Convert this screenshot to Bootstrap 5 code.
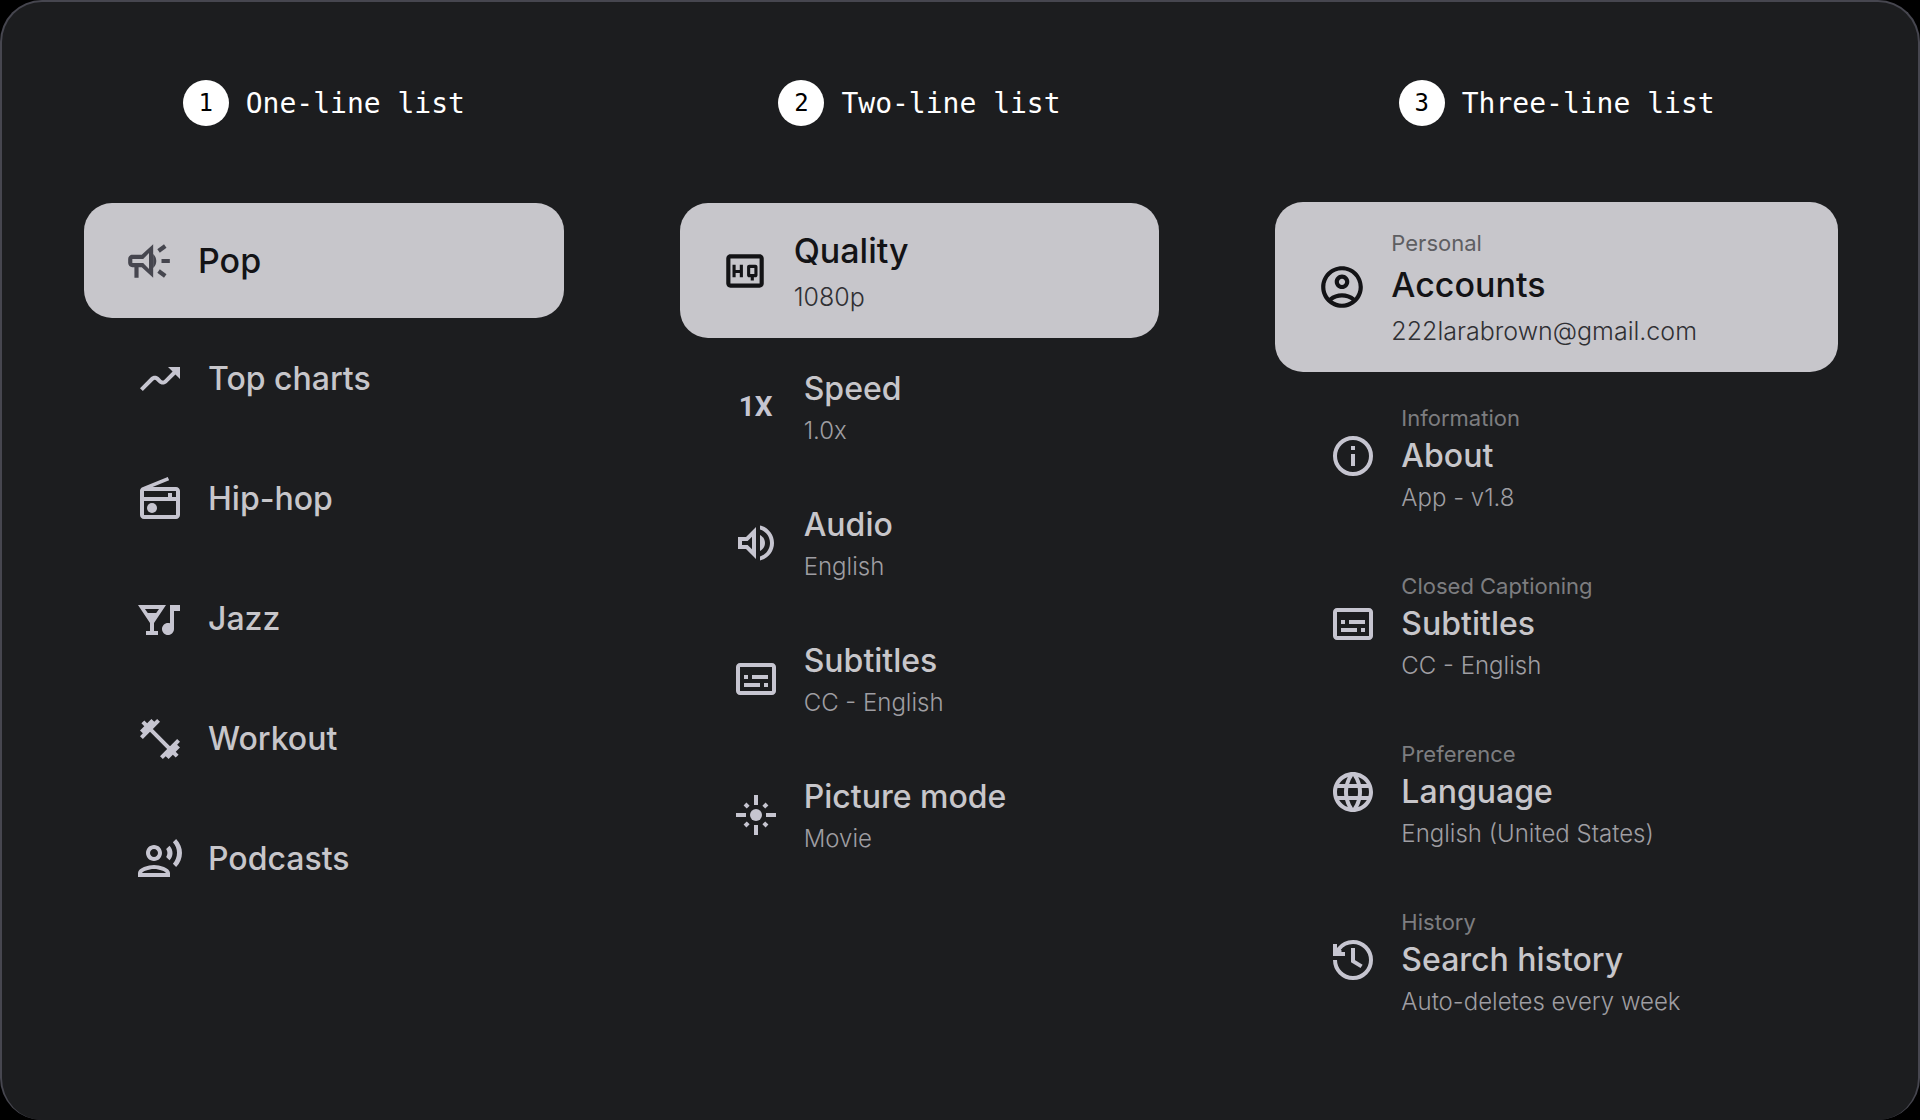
<!DOCTYPE html>
<html lang="en" data-bs-theme="dark">
<head>
<meta charset="utf-8">
<meta name="viewport" content="width=device-width, initial-scale=1">
<title>List types</title>
<link href="https://cdn.jsdelivr.net/npm/bootstrap@5.3.0/dist/css/bootstrap.min.css" rel="stylesheet">
<style>
  body { background: #000; font-family: Inter, "Open Sans", sans-serif; }
  .stage { background: #1c1d1f; border: 2px solid #46464f; border-bottom: 0; border-radius: 42px; padding: 78px 80px 40px 82px; }
  .columns { display: grid; grid-template-columns: 480fr 480fr 563fr; column-gap: 116px; }
  .col-title { margin-bottom: 75px; gap: 17px; color: #fff; font: 500 28px/48px "DejaVu Sans Mono", monospace; }
  .col-title.tight { margin-bottom: 74px; }
  .num { width: 46px; height: 46px; font-size: 24px; line-height: 46px; background: #fff; color: #000; }

  .tv-list { --bs-list-group-bg: transparent; --bs-list-group-border-width: 0; --bs-list-group-color: #c7c6ca;
    --bs-list-group-action-hover-bg: #2b2c2f; --bs-list-group-active-bg: #c7c6cb; --bs-list-group-active-color: #131316;
    --bs-list-group-border-radius: 28px; --bs-list-group-action-color: #c7c6ca; }
  .tv-item { display: flex; align-items: center; gap: 24px; padding: 0 24px 0 52px; border-radius: 28px; }
  .tv-item.active { padding-left: 40px; margin-bottom: 1px; }
  .one .tv-item { height: 120px; }
  .one .tv-item.active { height: 115px; }
  .two .tv-item { height: 136px; }
  .two .tv-item.active { height: 135px; }
  .three .tv-item { height: 168px; padding-left: 54px; }
  .three .tv-item.active { height: 170px; padding-left: 42px; margin-bottom: 0; }

  .glyph { width: 48px; height: 48px; flex: none; fill: #c6c5d0; stroke: none; }
  .glyph .ln { fill: none; stroke: #c6c5d0; stroke-width: 2; }
  .glyph-text { width: 48px; flex: none; text-align: center; color: #c6c5d0; font: 700 28px/48px Roboto, sans-serif; }
  .active .glyph { width: 50px; height: 50px; fill: #131316; }
  .active .glyph.soft { fill: #46464f; }

  .over { font-size: 22px; line-height: 28px; color: #7d7d80; font-weight: 400; }
  .head { font-size: 32px; line-height: 48px; font-weight: 500; }
  .sub { font-size: 24px; line-height: 36px; color: #9f9ea2; font-weight: 300; }
  .active .over { font-size: 22px; line-height: 32px; color: #5e5e62; }
  .active .head { font-size: 34px; line-height: 52px; }
  .active .sub { font-size: 25px; line-height: 40px; color: #303034; }
</style>
</head>
<body>
<main class="stage min-vh-100">
  <div class="columns">

    <section>
      <h2 class="col-title d-flex justify-content-center"><span class="num rounded-circle text-center">1</span>One-line list</h2>
      <div class="list-group tv-list one">
        <a href="#" class="list-group-item list-group-item-action tv-item active" aria-current="true">
          <svg class="glyph soft" viewBox="0 0 24 24" aria-hidden="true"><path d="M18 11v2h4v-2h-4zm-2 6.61c.96.71 2.21 1.65 3.2 2.39.4-.53.8-1.07 1.2-1.6-.99-.74-2.24-1.68-3.2-2.4-.4.54-.8 1.08-1.2 1.61zM20.4 5.6c-.4-.53-.8-1.07-1.2-1.6-.99.74-2.24 1.68-3.2 2.4.4.53.8 1.07 1.2 1.6.96-.72 2.21-1.65 3.2-2.4zM15.5 12c0-1.33-.58-2.53-1.5-3.35v6.69c.92-.81 1.5-2.01 1.5-3.34z"/><path fill-rule="evenodd" d="M4 9c-1.1 0-2 .9-2 2v2c0 1.1.9 2 2 2h1v5h2v-5h1.500L14 20V4L8.500 9H4zM12 8.200v7.600L9.200 13H4v-2h5.200z"/></svg>
          <span class="head">Pop</span>
        </a>
        <a href="#" class="list-group-item list-group-item-action tv-item">
          <svg class="glyph" viewBox="0 0 24 24" aria-hidden="true"><path d="M19.71 9.71L22 12V6h-6l2.29 2.29-4.17 4.17c-.39.39-1.02.39-1.41 0l-1.17-1.17c-1.17-1.17-3.07-1.17-4.24 0L2 16.59 3.41 18l5.29-5.29c.39-.39 1.02-.39 1.41 0l1.17 1.17c1.17 1.17 3.07 1.17 4.24 0l4.19-4.17z"/></svg>
          <span class="head">Top charts</span>
        </a>
        <a href="#" class="list-group-item list-group-item-action tv-item">
          <svg class="glyph" viewBox="0 0 24 24" aria-hidden="true"><path d="M20 6H8.3l8.26-3.34L15.88 1 3.24 6.15C2.51 6.43 2 7.17 2 8v12c0 1.1.89 2 2 2h16c1.11 0 2-.9 2-2V8c0-1.11-.89-2-2-2zm0 2v3h-2V9h-2v2H4V8h16zM4 20v-7h16v7H4z"/><circle cx="8" cy="16.48" r="2.5"/></svg>
          <span class="head">Hip-hop</span>
        </a>
        <a href="#" class="list-group-item list-group-item-action tv-item">
          <svg class="glyph" viewBox="0 0 24 24" aria-hidden="true"><path fill-rule="evenodd" d="M1 5h14l-6 9v4h2v2H5v-2h2v-4L1 5zM10.1 9l1.4-2H4.49l1.4 2h4.21zM17 5h5v3h-3v9c0 1.66-1.34 3-3 3s-3-1.34-3-3 1.34-3 3-3c.35 0 .69.06 1 .17V5z"/></svg>
          <span class="head">Jazz</span>
        </a>
        <a href="#" class="list-group-item list-group-item-action tv-item">
          <svg class="glyph" viewBox="0 0 24 24" aria-hidden="true"><path d="M20.57 14.86L22 13.43 20.57 12 17 15.57 8.43 7 12 3.43 10.57 2 9.14 3.43 7.71 2 5.57 4.14 4.14 2.71 2.71 4.14l1.43 1.43L2 7.71l1.43 1.43L2 10.57 3.43 12 7 8.43 15.57 17 12 20.57 13.43 22l1.43-1.43L16.29 22l2.14-2.14 1.43 1.43 1.43-1.43-1.43-1.43L22 16.29z"/></svg>
          <span class="head">Workout</span>
        </a>
        <a href="#" class="list-group-item list-group-item-action tv-item">
          <svg class="glyph" viewBox="0 0 24 24" aria-hidden="true"><path d="M9 13c2.21 0 4-1.79 4-4s-1.79-4-4-4-4 1.79-4 4 1.79 4 4 4zm0-6c1.1 0 2 .9 2 2s-.9 2-2 2-2-.9-2-2 .9-2 2-2zm0 8c-2.67 0-8 1.34-8 4v2h16v-2c0-2.66-5.33-4-8-4zm-6 4c.22-.72 3.31-2 6-2 2.7 0 5.8 1.29 6 2H3zM15.08 7.05c.84 1.18.84 2.71 0 3.89l1.68 1.69c2.02-2.02 2.02-5.07 0-7.27l-1.68 1.69zM20.07 2l-1.63 1.63c2.77 3.02 2.77 7.56 0 10.74L20.07 16c3.9-3.89 3.91-9.95 0-14z"/></svg>
          <span class="head">Podcasts</span>
        </a>
      </div>
    </section>

    <section>
      <h2 class="col-title d-flex justify-content-center"><span class="num rounded-circle text-center">2</span>Two-line list</h2>
      <div class="list-group tv-list two">
        <a href="#" class="list-group-item list-group-item-action tv-item active" aria-current="true">
          <svg class="glyph" viewBox="0 0 24 24" aria-hidden="true"><path d="M19 4H5c-1.11 0-2 .9-2 2v12c0 1.1.89 2 2 2h14c1.1 0 2-.9 2-2V6c0-1.1-.9-2-2-2zm0 14H5V6h14v12z"/><path d="M7.5 13h2v2H11V9H9.5v2.500h-2V9H6v6h1.500v-2zm6.500 2h.75v1.500h1.500V15H17c.55 0 1-.45 1-1v-4c0-.55-.45-1-1-1h-3c-.55 0-1 .45-1 1v4c0 .55.45 1 1 1zm.500-4.500h2v3h-2v-3z"/></svg>
          <span><span class="head d-block">Quality</span><span class="sub d-block">1080p</span></span>
        </a>
        <a href="#" class="list-group-item list-group-item-action tv-item">
          <span class="glyph-text">1X</span>
          <span><span class="head d-block">Speed</span><span class="sub d-block">1.0x</span></span>
        </a>
        <a href="#" class="list-group-item list-group-item-action tv-item">
          <svg class="glyph" viewBox="0 0 24 24" aria-hidden="true"><path d="M3 9v6h4l5 5V4L7 9H3zm7-.17v6.34L7.83 13H5v-2h2.83L10 8.83zM16.5 12c0-1.77-1.02-3.29-2.5-4.03v8.05c1.48-.73 2.5-2.25 2.5-4.02zM14 3.23v2.06c2.89.86 5 3.54 5 6.71s-2.11 5.85-5 6.71v2.06c4.01-.91 7-4.49 7-8.77s-2.99-7.86-7-8.77z"/></svg>
          <span><span class="head d-block">Audio</span><span class="sub d-block">English</span></span>
        </a>
        <a href="#" class="list-group-item list-group-item-action tv-item">
          <svg class="glyph" viewBox="0 0 24 24" aria-hidden="true"><path d="M20 4H4c-1.1 0-2 .9-2 2v12c0 1.1.9 2 2 2h16c1.1 0 2-.9 2-2V6c0-1.1-.9-2-2-2zm0 14H4V6h16v12zM6 10h2v2H6zM6 14h8v2H6zM16 14h2v2h-2zM10 10h8v2h-8z"/></svg>
          <span><span class="head d-block">Subtitles</span><span class="sub d-block">CC - English</span></span>
        </a>
        <a href="#" class="list-group-item list-group-item-action tv-item">
          <svg class="glyph" viewBox="0 0 24 24" aria-hidden="true"><circle cx="12" cy="12" r="3"/><path class="ln" d="M2 12h5M17 12h5M12 2v5M12 17v5M6.5 6.5l1.6 1.6M17.5 6.5l-1.6 1.6M6.5 17.5l1.6-1.6M17.5 17.5l-1.6-1.6"/></svg>
          <span><span class="head d-block">Picture mode</span><span class="sub d-block">Movie</span></span>
        </a>
      </div>
    </section>

    <section>
      <h2 class="col-title tight d-flex justify-content-center"><span class="num rounded-circle text-center">3</span>Three-line list</h2>
      <div class="list-group tv-list three">
        <a href="#" class="list-group-item list-group-item-action tv-item active" aria-current="true">
          <svg class="glyph" viewBox="0 0 24 24" aria-hidden="true"><path d="M12 2C6.48 2 2 6.48 2 12s4.48 10 10 10 10-4.48 10-10S17.52 2 12 2zM7.35 18.5C8.66 17.56 10.26 17 12 17s3.34.56 4.65 1.5c-1.31.94-2.91 1.5-4.65 1.5s-3.34-.56-4.65-1.5zm10.79-1.38C16.45 15.8 14.32 15 12 15s-4.45.8-6.14 2.12C4.7 15.73 4 13.95 4 12c0-4.42 3.58-8 8-8s8 3.58 8 8c0 1.95-.7 3.73-1.86 5.12zM12 6c-1.93 0-3.5 1.57-3.5 3.5S10.07 13 12 13s3.5-1.57 3.5-3.5S13.93 6 12 6zm0 5c-.83 0-1.5-.67-1.5-1.5S11.17 8 12 8s1.5.67 1.5 1.5S12.83 11 12 11z"/></svg>
          <span class="pt-1"><span class="over d-block">Personal</span><span class="head d-block">Accounts</span><span class="sub d-block">222larabrown@gmail.com</span></span>
        </a>
        <a href="#" class="list-group-item list-group-item-action tv-item">
          <svg class="glyph" viewBox="0 0 24 24" aria-hidden="true"><circle class="ln" cx="12" cy="12" r="9"/><path d="M11 7h2v2h-2zM11 11h2v6h-2z"/></svg>
          <span class="pt-2"><span class="over d-block">Information</span><span class="head d-block">About</span><span class="sub d-block">App - v1.8</span></span>
        </a>
        <a href="#" class="list-group-item list-group-item-action tv-item">
          <svg class="glyph" viewBox="0 0 24 24" aria-hidden="true"><path d="M20 4H4c-1.1 0-2 .9-2 2v12c0 1.1.9 2 2 2h16c1.1 0 2-.9 2-2V6c0-1.1-.9-2-2-2zm0 14H4V6h16v12zM6 10h2v2H6zM6 14h8v2H6zM16 14h2v2h-2zM10 10h8v2h-8z"/></svg>
          <span class="pt-2"><span class="over d-block">Closed Captioning</span><span class="head d-block">Subtitles</span><span class="sub d-block">CC - English</span></span>
        </a>
        <a href="#" class="list-group-item list-group-item-action tv-item">
          <svg class="glyph" viewBox="0 0 24 24" aria-hidden="true"><path d="M11.99 2C6.47 2 2 6.48 2 12s4.47 10 9.99 10C17.52 22 22 17.52 22 12S17.52 2 11.99 2zm6.93 6h-2.95c-.32-1.25-.78-2.45-1.38-3.56 1.84.63 3.37 1.91 4.33 3.56zM12 4.04c.83 1.2 1.48 2.53 1.91 3.96h-3.82c.43-1.43 1.08-2.76 1.91-3.96zM4.26 14C4.1 13.36 4 12.69 4 12s.1-1.36.26-2h3.38c-.08.66-.14 1.32-.14 2s.06 1.34.14 2H4.26zm.82 2h2.95c.32 1.25.78 2.45 1.38 3.56-1.84-.63-3.37-1.9-4.33-3.56zm2.95-8H5.08c.96-1.66 2.49-2.93 4.33-3.56C8.81 5.55 8.35 6.75 8.03 8zM12 19.96c-.83-1.2-1.48-2.53-1.91-3.96h3.82c-.43 1.43-1.08 2.76-1.91 3.96zM14.34 14H9.66c-.09-.66-.16-1.32-.16-2s.07-1.35.16-2h4.68c.09.65.16 1.32.16 2s-.07 1.34-.16 2zm.25 5.56c.6-1.11 1.06-2.31 1.38-3.56h2.95c-.96 1.65-2.49 2.93-4.33 3.56zM16.36 14c.08-.66.14-1.32.14-2s-.06-1.34-.14-2h3.38c.16.64.26 1.31.26 2s-.1 1.36-.26 2h-3.38z"/></svg>
          <span class="pt-2"><span class="over d-block">Preference</span><span class="head d-block">Language</span><span class="sub d-block">English (United States)</span></span>
        </a>
        <a href="#" class="list-group-item list-group-item-action tv-item">
          <svg class="glyph" viewBox="0 0 24 24" aria-hidden="true"><path class="ln" d="M3 12a9 9 0 1 0 9-9C9 3 6.600 4.300 4.900 6.500L3.300 8.800M12 6v6.600l4.300 2.600"/><path d="M2 4h2v3l1-1 1.500 1.500L6 8h2v2H2z"/></svg>
          <span class="pt-2"><span class="over d-block">History</span><span class="head d-block">Search history</span><span class="sub d-block">Auto-deletes every week</span></span>
        </a>
      </div>
    </section>

  </div>
</main>
<script src="https://cdn.jsdelivr.net/npm/bootstrap@5.3.0/dist/js/bootstrap.bundle.min.js"></script>
</body>
</html>
